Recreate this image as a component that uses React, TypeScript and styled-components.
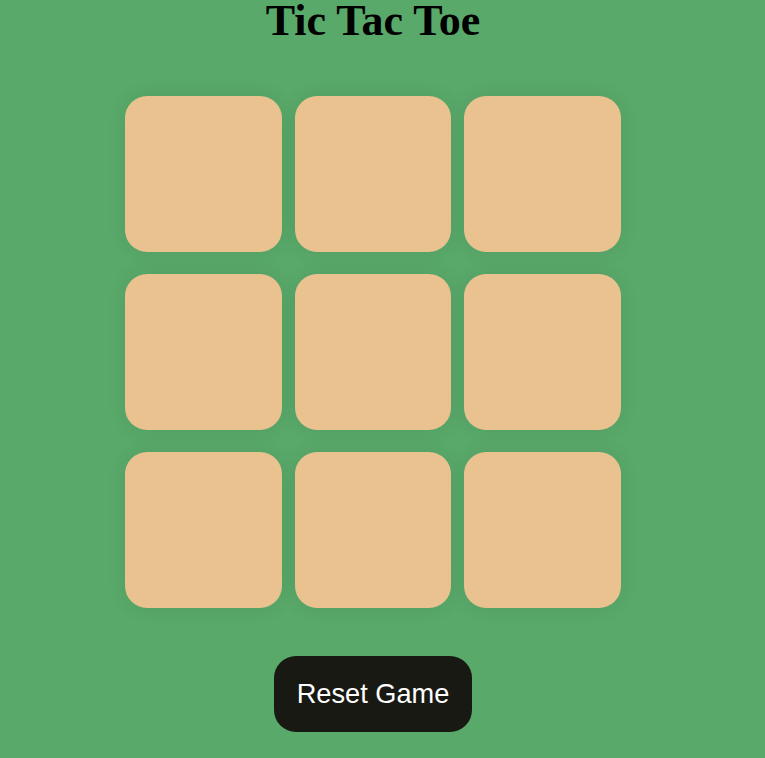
import React, { useState } from 'react';
import styled, { createGlobalStyle } from 'styled-components';

const GlobalStyle = createGlobalStyle`
  html, body {
    margin: 0;
    padding: 0;
    background-color: #59a96a;
  }
`;

type Mark = 'X' | 'O' | null;

const App = (): JSX.Element => {
  const [board, setBoard] = useState<Mark[]>(Array(9).fill(null));
  const [xNext, setXNext] = useState(true);

  const play = (index: number) => {
    if (board[index]) return;
    const next = [...board];
    next[index] = xNext ? 'X' : 'O';
    setBoard(next);
    setXNext(!xNext);
  };

  const reset = () => {
    setBoard(Array(9).fill(null));
    setXNext(true);
  };

  return (
    <>
      <GlobalStyle />
      <Page>
        <Title>Tic Tac Toe</Title>
        <Board>
          {board.map((mark, index) => (
            <Cell key={index} onClick={() => play(index)}>
              {mark}
            </Cell>
          ))}
        </Board>
        <ResetButton onClick={reset}>Reset Game</ResetButton>
      </Page>
    </>
  );
};

const Page = styled.div`
  width: 746px;
  min-height: 758px;
  display: flex;
  flex-direction: column;
  align-items: center;
`;

const Title = styled.h1`
  font-family: 'Liberation Serif', 'Times New Roman', serif;
  font-size: 44px;
  font-weight: 700;
  color: #000;
  margin: 0;
  line-height: 42px;
`;

const Board = styled.div`
  margin-top: 54px;
  width: 496px;
  display: grid;
  grid-template-columns: repeat(3, 1fr);
  grid-auto-rows: 156px;
  column-gap: 13px;
  row-gap: 22px;
`;

const Cell = styled.div`
  background-color: #e9c290;
  border-radius: 22px;
  box-shadow: 0 0 20px rgba(0, 0, 0, 0.08);
  display: flex;
  align-items: center;
  justify-content: center;
  font-family: 'Liberation Sans', Arial, sans-serif;
  font-size: 64px;
  font-weight: 700;
  color: #191913;
  cursor: pointer;
`;

const ResetButton = styled.button`
  margin-top: 48px;
  width: 198px;
  height: 76px;
  border: none;
  border-radius: 22px;
  background-color: #191913;
  color: #fff;
  font-family: 'Liberation Sans', Arial, sans-serif;
  font-size: 27.2px;
  cursor: pointer;
`;

export default App;
